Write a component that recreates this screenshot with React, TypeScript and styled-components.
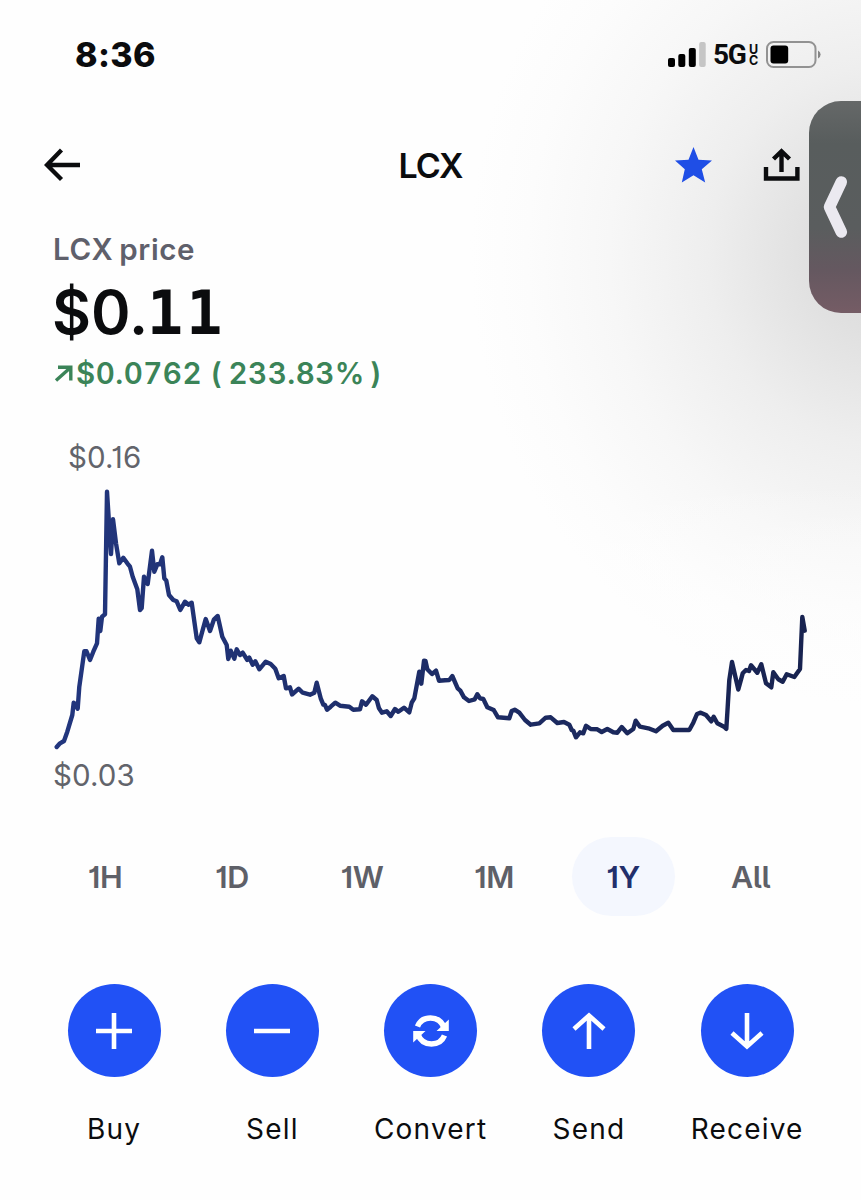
import React from "react";
import styled, { createGlobalStyle } from "styled-components";

const GlobalStyle = createGlobalStyle`
  * { box-sizing: border-box; }
  body { margin: 0; background: #fefefe; }
  button { border: 0; padding: 0; background: none; font: inherit; color: inherit; }
`;

const Screen = styled.main`
  position: relative;
  width: 861px;
  height: 1200px;
  overflow: hidden;
  display: flex;
  flex-direction: column;
  font-family: Inter, "Liberation Sans", sans-serif;
  color: #0b0c0e;
  background:
    linear-gradient(to bottom, transparent 0, transparent 480px, #fefefe 735px),
    radial-gradient(ellipse 410px 450px at 880px 255px, #dadada 0%, #e0e0e0 17%, #eeeeee 42%, #f7f7f7 66%, #fcfcfc 86%, #fefefe 100%);
`;

const StatusBar = styled.div`
  height: 108px;
  padding: 0 40px 0 75px;
  display: flex;
  align-items: center;
  justify-content: space-between;
`;

const Clock = styled.span`
  padding-top: 1px;
  font-size: 34px;
  font-weight: 800;
  line-height: 40px;
  letter-spacing: 0.4px;
`;

const StatusIcons = styled.div`
  display: flex;
  align-items: center;
`;

const Network = styled.span`
  width: 36px;
  margin-left: 6px;
  padding-top: 2px;
  font-family: Roboto, sans-serif;
  font-size: 28px;
  font-weight: 700;
  line-height: 30px;
  letter-spacing: -1.2px;
`;

const NetworkBand = styled.span`
  display: flex;
  flex-direction: column;
  width: 11px;
  margin-right: 6px;
  padding-top: 2px;
  font-size: 12.5px;
  font-weight: 700;
  line-height: 11px;
`;

const NavBar = styled.header`
  height: 114px;
  padding: 0 61px 0 44px;
  display: grid;
  grid-template-columns: 200px 1fr 200px;
  align-items: center;
`;

const Title = styled.h1`
  margin: 0;
  padding: 2px 0 0 17px;
  text-align: center;
  font-size: 34px;
  font-weight: 600;
  line-height: 40px;
  letter-spacing: -1.2px;
`;

const NavActions = styled.div`
  display: flex;
  justify-content: flex-end;
  align-items: center;
  gap: 50px;
`;

const Summary = styled.section`
  height: 214px;
  padding: 8px 0 0 53px;
`;

const AssetLabel = styled.div`
  height: 40px;
  line-height: 39px;
  font-size: 29.5px;
  font-weight: 600;
  letter-spacing: 0.6px;
  word-spacing: -2px;
  color: #5f606b;
`;

const Price = styled.div`
  height: 86px;
  margin-left: -1px;
  line-height: 84px;
  font-size: 60px;
  font-weight: 600;
  white-space: nowrap;
`;

const SlabDigits = styled.span`
  font-family: "DejaVu Sans Mono", monospace;
  font-weight: 700;
  font-size: 60px;
  line-height: 1;
  margin-left: -1px;
  letter-spacing: 3px;
`;

const Change = styled.div`
  display: flex;
  align-items: center;
  height: 34px;
  font-size: 29.5px;
  font-weight: 600;
  line-height: 34px;
  letter-spacing: 0.5px;
  font-variant-numeric: tabular-nums;
  white-space: pre;
  color: #3b8458;
`;

const Percent = styled.span`
  padding: 0 5px 0 6px;
`;

const ChartPanel = styled.section`
  height: 362px;
  display: flex;
  flex-direction: column;
`;

const Extreme = styled.div<{ $indent: number; $drop?: number }>`
  height: 40px;
  padding: ${(p) => p.$drop ?? 0}px 0 0 ${(p) => p.$indent}px;
  font-size: 29.5px;
  line-height: 39px;
  letter-spacing: 0.1px;
  font-feature-settings: "cv01";
  color: #62646b;
`;

const Ranges = styled.nav`
  height: 156px;
  padding-left: 41px;
  display: grid;
  grid-template-columns: 128px 126px 134px 130px 128px 127px;
  align-items: center;
  justify-items: center;
`;

const Range = styled.button<{ $active?: boolean }>`
  width: 103px;
  height: 79px;
  border-radius: 40px;
  font-size: 30.5px;
  font-weight: 600;
  letter-spacing: -0.4px;
  font-feature-settings: "cv01", "cv05";
  color: ${(p) => (p.$active ? "#222f6b" : "#5e6068")};
  background: ${(p) => (p.$active ? "#f4f7fe" : "transparent")};
`;

const Actions = styled.section`
  padding: 30px 0 0 35px;
  display: grid;
  grid-template-columns: repeat(5, 158.25px);
`;

const Action = styled.button`
  display: flex;
  flex-direction: column;
  align-items: center;
  gap: 32px;
  font-size: 28px;
  line-height: 40px;
  letter-spacing: 1.2px;
`;

const Disc = styled.span`
  width: 93px;
  height: 93px;
  border-radius: 50%;
  display: flex;
  align-items: center;
  justify-content: center;
  background: #2151f5;
`;

const Drawer = styled.button`
  position: absolute;
  top: 101px;
  right: 0;
  width: 52px;
  height: 212px;
  border-radius: 32px 0 0 32px;
  background: linear-gradient(to bottom, #656868 0%, #585d5d 20%, #5a5d5e 60%, #655860 80%, #755c65 100%);
`;

const SERIES =
  "56.7,747 60,743.3 64,741 67.3,731.7 72.3,715 73.7,702.7 75.5,704 77.7,708.7 79.3,686.7 84.3,651.3 86.5,651.3 90,660 93.3,651.7 97,643.3 98.7,618.7 100.3,631 102,616.7 105,614.3 107,491.7 111,554 113,519.3 116,543.3 119.3,563.3 123.3,557.7 127.3,563.3 130,566.7 132.7,576.7 137.3,589.3 140,610 141.7,608 144,576.7 147.7,584 152,550.7 154.3,571.7 157.3,564.3 160,564.3 162.3,557.3 164.3,578.3 166.3,580.7 169,595 173.3,600 176.7,601.3 180.3,610 185,601.7 188.7,604.7 191.7,602.7 196.7,638.3 199.3,642.3 205.7,619 210,631 214,619.3 217.7,616 222.3,636.7 226.7,645 228.3,659 230.7,650.7 234.3,658.7 236.7,649.3 240,655 242.7,652.7 247.3,660 249.3,657.7 252.7,664.7 255.3,661.3 259.3,669.3 265.7,661.7 270.7,664 275.3,668.7 278.7,678.3 283.7,676 286,688.3 290,687.3 292,694.5 298.7,688.7 302.7,692.7 310,694.7 314.3,692.7 316.7,682.7 320.7,698.3 323.3,704.7 325,705 327,709.7 330.7,706.7 335.3,702.7 340,705.7 349.3,706.7 353.3,709.7 360,709.3 362,701.3 366,704.7 372.3,696.3 376.7,700 379,708.3 382,712.7 386.7,711.3 390.7,716 395,709 398.3,711.7 404,707.7 409.3,712.3 411.7,702.7 414.3,698.3 419.3,671.7 421.3,683.7 424,660.8 425.5,661 427.3,669.3 432,674 436,670.7 439,680.7 445,680.3 449.3,680 452.3,676 457.7,688.3 460.3,690.7 464,697.3 469,701 474.7,699.3 477.3,694.3 480,698.3 483.3,699 487.3,707.3 493.7,710 498,717.3 509.3,718.3 511.7,711 514.7,709.7 519.3,712.7 525,720 530.7,724.7 539.3,723.3 545.7,717.7 550.7,717.3 557.3,723 564,722 569.3,724.7 571.7,730 573.3,730.7 576,737.3 580,732.3 583.3,733.3 586,725.7 590.7,729 597.3,729.3 601.7,732 607.3,729 613.3,732.3 617.3,732.7 621.7,727 627.3,733.3 633.3,729 635.7,720.7 640,726.7 648.3,728.3 656,731.3 662.7,725.7 668.3,722.7 673.3,730 689.3,730 693.3,722.7 697,714 700.7,712.7 706,715 711.3,721.3 713.7,716.7 717.3,723.3 724,726.7 726.3,728.8 727.3,713.3 729.3,680 732,662 738.3,689.5 742.7,673.3 746,670 749,671 751,665.3 757.3,672.7 761.3,664.3 766,683.3 771.3,687.3 773.3,672.3 778.3,679.3 782.7,681.7 786.7,674.3 794.3,677 800,669 802.3,617 804.7,630.7";

const BackIcon = () => (
  <svg width="37" height="34" viewBox="0 0 37 34" fill="none" stroke="#0b0c0e" strokeWidth="4.3">
    <path d="M36 17H3.5M17.5 2L3 17L17.5 31.5" />
  </svg>
);

const StarIcon = () => (
  <svg width="38" height="36" viewBox="0 0 38 36" fill="#1f4ee6">
    <path d="M18.5 0L23.5 12.7L37 13.5L26.8 22.3L30.2 35.4L18.5 28.2L6.8 35.4L9.8 22.3L0 13.5L13.5 12.7Z" />
  </svg>
);

const ShareIcon = () => (
  <svg width="37" height="34" viewBox="0 0 37 34" fill="none" stroke="#0b0c0e" strokeWidth="4.4">
    <path d="M3 19V30.5H34.4V19M18.5 24V3M10.5 11L18.5 3.2L26.5 11" />
  </svg>
);

const SignalIcon = () => (
  <svg width="39" height="27" viewBox="0 0 39 27">
    <rect x="0" y="17" width="7" height="9" rx="2" />
    <rect x="10.3" y="13" width="7" height="13" rx="2" />
    <rect x="20.8" y="7" width="7" height="19" rx="2" />
    <rect x="31.2" y="1" width="6.5" height="25" rx="2" fill="#c5c5c5" />
  </svg>
);

const BatteryIcon = () => (
  <svg width="55" height="27" viewBox="0 0 55 27">
    <rect x="1" y="1" width="48.5" height="25" rx="6.5" fill="none" stroke="#929292" strokeWidth="2" />
    <rect x="4.5" y="4.6" width="17.7" height="17.8" rx="3" />
    <path d="M52 9.5Q54.6 11 54.6 13.5T52 17.5Z" fill="#858585" />
  </svg>
);

const RiseIcon = () => (
  <svg width="23" height="20" viewBox="0 0 23 20" fill="none" stroke="#3b8458" strokeWidth="3.4">
    <path d="M3 17.5L17 5M5 4.3H17.8V17.5" />
  </svg>
);

const GLYPHS: Record<string, React.ReactNode> = {
  Buy: <path d="M20 2V38M2 20H38" />,
  Sell: <path d="M2 20H38" />,
  Convert: (
    <g>
      <path d="M6.5 15.5C9 9.4 14 7 19.5 7C26 7 31 11 33.3 17M33.5 24.5C31 30.6 26 33 20.5 33C14 33 9 29 6.7 23" strokeWidth="5.6" />
      <path d="M37.8 8.5V20H25.5ZM2.2 31.5V20H14.5Z" fill="#fff" stroke="none" />
    </g>
  ),
  Send: <path d="M20 38V5M5 18L20 4.5L35 18" />,
  Receive: <path d="M20 2V35M5 22L20 35.5L35 22" />,
};

const RANGES = ["1H", "1D", "1W", "1M", "1Y", "All"];

export default function App() {
  return (
    <>
      <GlobalStyle />
      <Screen>
        <StatusBar>
          <Clock>8:36</Clock>
          <StatusIcons>
            <SignalIcon />
            <Network>5G</Network>
            <NetworkBand>
              <span>U</span>
              <span>C</span>
            </NetworkBand>
            <BatteryIcon />
          </StatusIcons>
        </StatusBar>
        <NavBar>
          <BackIcon />
          <Title>LCX</Title>
          <NavActions>
            <StarIcon />
            <ShareIcon />
          </NavActions>
        </NavBar>
        <Summary>
          <AssetLabel>LCX price</AssetLabel>
          <Price>
            $0.<SlabDigits>11</SlabDigits>
          </Price>
          <Change>
            <RiseIcon />
            <span>$0.0762 (</span>
            <Percent>233.83%</Percent>
            <span>)</span>
          </Change>
        </Summary>
        <ChartPanel>
          <Extreme $indent={68} $drop={2}>$0.16</Extreme>
          <svg width="861" height="280" viewBox="0 476 861 280" fill="none">
            <defs>
              <linearGradient id="line" x1="56" x2="805" y1="0" y2="0" gradientUnits="userSpaceOnUse">
                <stop offset="0" stopColor="#22367e" />
                <stop offset="1" stopColor="#182350" />
              </linearGradient>
            </defs>
            <polyline points={SERIES} stroke="url(#line)" strokeWidth="4.4" strokeLinejoin="round" strokeLinecap="round" />
          </svg>
          <Extreme $indent={53}>$0.03</Extreme>
        </ChartPanel>
        <Ranges>
          {RANGES.map((r) => (
            <Range key={r} $active={r === "1Y"}>
              {r}
            </Range>
          ))}
        </Ranges>
        <Actions>
          {Object.entries(GLYPHS).map(([name, glyph]) => (
            <Action key={name}>
              <Disc>
                <svg width="40" height="40" viewBox="0 0 40 40" fill="none" stroke="#fff" strokeWidth="4.6">
                  {glyph}
                </svg>
              </Disc>
              {name}
            </Action>
          ))}
        </Actions>
        <Drawer aria-label="Open drawer">
          <svg width="52" height="212" viewBox="0 0 52 212" fill="none">
            <path d="M32.3 81L20.5 106L32.3 131" stroke="#ebe9f0" strokeWidth="11.5" strokeLinecap="round" strokeLinejoin="round" />
          </svg>
        </Drawer>
      </Screen>
    </>
  );
}
